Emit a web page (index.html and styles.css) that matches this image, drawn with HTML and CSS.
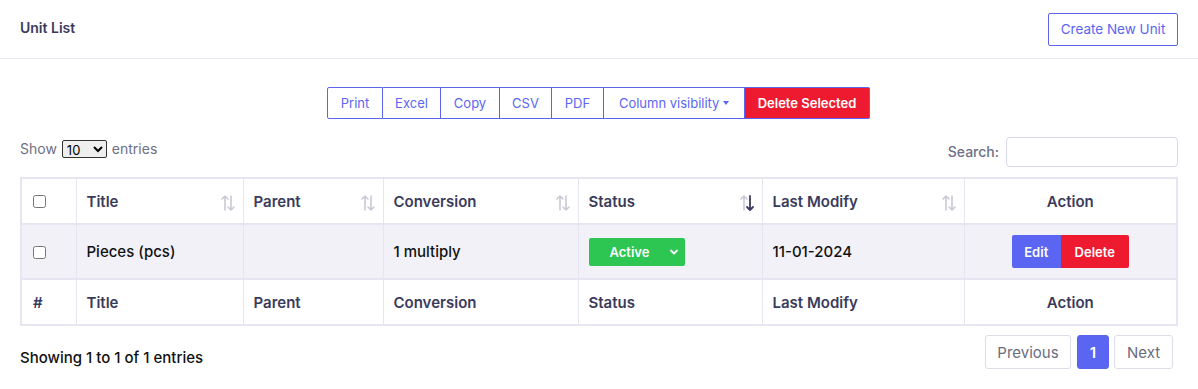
FILE: index.html
```html
<!DOCTYPE html>
<html lang="en">
  <head>
    <meta charset="UTF-8" />
    <meta name="viewport" content="width=device-width, initial-scale=1.0" />
    <title>Unit List</title>
    <link rel="stylesheet" href="styles.css">
  </head>
  <body>
    <div class="card">
      <header class="card-header">
        <h1>Unit List</h1>
        <a href="#" class="btn-outline">Create New Unit</a>
      </header>

      <div class="card-body">
        <div class="dt-buttons">
          <button class="b-print">Print</button>
          <button class="b-excel">Excel</button>
          <button class="b-copy">Copy</button>
          <button class="b-csv">CSV</button>
          <button class="b-pdf">PDF</button>
          <button class="b-cols">Column visibility <span class="caret"></span></button>
          <button class="danger">Delete Selected</button>
        </div>

        <div class="dt-top">
          <label class="length">
            Show
            <select>
              <option>10</option>
              <option>25</option>
              <option>50</option>
            </select>
            entries
          </label>
          <label class="search">
            Search:
            <input type="search" />
          </label>
        </div>

        <table class="units">
          <thead>
            <tr>
              <th class="col-check"><input type="checkbox" /></th>
              <th class="sortable">Title
                <svg class="sort" viewBox="0 0 16 18"><path class="up" d="M5 2 V16 M2 5 L5 2 L8 5"/><path class="down" d="M11 2 V16 M8 13 L11 16 L14 13"/></svg>
              </th>
              <th class="sortable">Parent
                <svg class="sort" viewBox="0 0 16 18"><path class="up" d="M5 2 V16 M2 5 L5 2 L8 5"/><path class="down" d="M11 2 V16 M8 13 L11 16 L14 13"/></svg>
              </th>
              <th class="sortable">Conversion
                <svg class="sort" viewBox="0 0 16 18"><path class="up" d="M5 2 V16 M2 5 L5 2 L8 5"/><path class="down" d="M11 2 V16 M8 13 L11 16 L14 13"/></svg>
              </th>
              <th class="sortable desc">Status
                <svg class="sort" viewBox="0 0 16 18"><path class="up" d="M5 2 V16 M2 5 L5 2 L8 5"/><path class="down" d="M11 2 V16 M8 13 L11 16 L14 13"/></svg>
              </th>
              <th class="sortable">Last Modify
                <svg class="sort" viewBox="0 0 16 18"><path class="up" d="M5 2 V16 M2 5 L5 2 L8 5"/><path class="down" d="M11 2 V16 M8 13 L11 16 L14 13"/></svg>
              </th>
              <th class="center">Action</th>
            </tr>
          </thead>
          <tbody>
            <tr>
              <td class="col-check"><input type="checkbox" /></td>
              <td>Pieces (pcs)</td>
              <td></td>
              <td>1 multiply</td>
              <td>
                <div class="status">
                  <span>Active</span>
                  <svg width="10" height="10" viewBox="0 0 10 10"><path d="M2 3.5 L5 6.5 L8 3.5" fill="none" stroke="#fff" stroke-width="1.8" stroke-linecap="round" stroke-linejoin="round"/></svg>
                </div>
              </td>
              <td>11-01-2024</td>
              <td class="center">
                <div class="actions">
                  <button class="edit">Edit</button>
                  <button class="delete">Delete</button>
                </div>
              </td>
            </tr>
          </tbody>
          <tfoot>
            <tr>
              <th class="col-check">#</th>
              <th>Title</th>
              <th>Parent</th>
              <th>Conversion</th>
              <th>Status</th>
              <th>Last Modify</th>
              <th class="center">Action</th>
            </tr>
          </tfoot>
        </table>

        <div class="dt-bottom">
          <div class="info">Showing 1 to 1 of 1 entries</div>
          <div class="paging">
            <a href="#" class="page prev">Previous</a>
            <a href="#" class="page current">1</a>
            <a href="#" class="page next">Next</a>
          </div>
        </div>
      </div>
    </div>
  </body>
</html>
```

FILE: styles.css
```css
:root {
  --primary: #5a66f1;
  --danger: #ee1a2f;
  --success: #2dc653;
  --heading: #3a3b5b;
  --line: #e6e5f2;
  --muted: #6f6f86;
}

* {
  margin: 0;
  padding: 0;
  box-sizing: border-box;
}

body {
  font-family: Inter, "Open Sans", sans-serif;
  background: #fff;
  color: #111;
}

.card {
  width: 1198px;
}

.card-header {
  display: flex;
  justify-content: space-between;
  align-items: center;
  height: 59px;
  padding: 0 20px;
  border-bottom: 1px solid var(--line);
}

.card-header h1 {
  font-size: 14px;
  font-weight: 600;
  color: var(--heading);
  margin-top: -4px;
}

.btn-outline {
  display: inline-flex;
  align-items: center;
  justify-content: center;
  width: 130px;
  height: 33px;
  border: 1px solid var(--primary);
  border-radius: 2px;
  color: var(--primary);
  font-size: 13.5px;
  text-decoration: none;
}

.card-body {
  padding: 28px 20px 0;
}

.dt-buttons {
  display: flex;
  justify-content: center;
  padding-right: 1px;
}

.dt-buttons button {
  font-family: inherit;
  font-size: 13px;
  color: var(--primary);
  background: #fff;
  border: 1px solid var(--primary);
  border-left: none;
  height: 32px;
  padding: 0;
  cursor: pointer;
}

.dt-buttons .b-print {
  width: 56px;
  border-left: 1px solid var(--primary);
  border-radius: 2px 0 0 2px;
}

.dt-buttons .b-excel { width: 58px; }
.dt-buttons .b-copy { width: 59px; }
.dt-buttons .b-csv { width: 52px; }
.dt-buttons .b-pdf { width: 52px; }
.dt-buttons .b-cols { width: 141px; }

.dt-buttons button.danger {
  background: var(--danger);
  color: #fff;
  font-weight: 600;
  width: 125px;
  border-radius: 0 2px 2px 0;
}

.caret {
  display: inline-block;
  vertical-align: 3px;
  border-left: 3.5px solid transparent;
  border-right: 3.5px solid transparent;
  border-top: 4px solid var(--primary);
}

.dt-top {
  display: flex;
  justify-content: space-between;
  align-items: center;
  margin-top: 17px;
  height: 31px;
}

.dt-top label {
  font-size: 14px;
  color: var(--muted);
  display: flex;
  align-items: center;
  gap: 5px;
}

.length {
  margin-top: -6px;
}

.length select {
  font-family: inherit;
  font-size: 13px;
  width: 45px;
  height: 18px;
  border: 1px solid #333;
  border-radius: 2px;
  color: #000;
}

.search {
  font-weight: 500;
}

.search input {
  width: 172px;
  height: 30px;
  border: 1px solid #d9d8e8;
  border-radius: 4px;
  margin-left: 2px;
}

table.units {
  width: 100%;
  margin-top: 10px;
  border-collapse: collapse;
  border: 2px solid var(--line);
  font-size: 15px;
}

table.units th,
table.units td {
  border: 1px solid var(--line);
  text-align: left;
  padding: 0 10px;
}

table.units thead th,
table.units tfoot th {
  height: 46px;
  font-weight: 600;
  color: var(--heading);
}

table.units thead th {
  border-bottom: 2px solid var(--line);
}

table.units tfoot th {
  border-top: 2px solid var(--line);
}

table.units tbody td {
  height: 55px;
  background: #f2f1f8;
  font-weight: 500;
}

th.col-check,
td.col-check {
  width: 55px;
  padding-left: 11px !important;
}

table.units th:nth-child(2) { width: 167px; }
table.units th:nth-child(3) { width: 140px; }
table.units th:nth-child(4) { width: 195px; }
table.units th:nth-child(5) { width: 184px; }
table.units th:nth-child(6) { width: 202px; }

.col-check input {
  width: 13px;
  height: 13px;
  display: block;
  margin-top: 1px;
}

th.sortable {
  position: relative;
}

.sort {
  position: absolute;
  right: 7px;
  top: 15px;
  width: 16px;
  height: 18px;
  fill: none;
  stroke-width: 1.6;
  stroke-linecap: round;
  stroke-linejoin: round;
}

.sort path {
  stroke: #c9c9d6;
}

th.desc .sort .down {
  stroke: var(--heading);
  stroke-width: 1.8;
}

.center {
  text-align: center !important;
}

.status {
  display: flex;
  align-items: center;
  justify-content: space-between;
  width: 96px;
  height: 28px;
  background: var(--success);
  border-radius: 2px;
  color: #fff;
  font-size: 13px;
  font-weight: 600;
  padding: 0 6px 0 21px;
}

.actions {
  display: inline-flex;
}

.actions button {
  font-family: inherit;
  font-size: 13px;
  font-weight: 600;
  color: #fff;
  border: none;
  height: 33px;
  cursor: pointer;
}

.actions .edit {
  background: var(--primary);
  width: 49px;
  border-radius: 2px 0 0 2px;
}

.actions .delete {
  background: var(--danger);
  width: 68px;
  border-radius: 0 2px 2px 0;
}

.dt-bottom {
  display: flex;
  justify-content: space-between;
  align-items: center;
  margin-top: 9px;
}

.info {
  font-size: 15px;
  font-weight: 500;
  margin-top: 11px;
}

.paging {
  display: flex;
  gap: 5px;
  margin-right: 5px;
}

.page {
  display: inline-flex;
  align-items: center;
  justify-content: center;
  height: 34px;
  border: 1px solid #dedde8;
  border-radius: 3px;
  font-size: 15px;
  color: #6a6c7e;
  text-decoration: none;
}

.page.prev { width: 86px; margin-right: 1px; }
.page.next { width: 59px; }

.page.current {
  background: var(--primary);
  border-color: var(--primary);
  color: #fff;
  font-weight: 600;
  width: 32px;
}
```
